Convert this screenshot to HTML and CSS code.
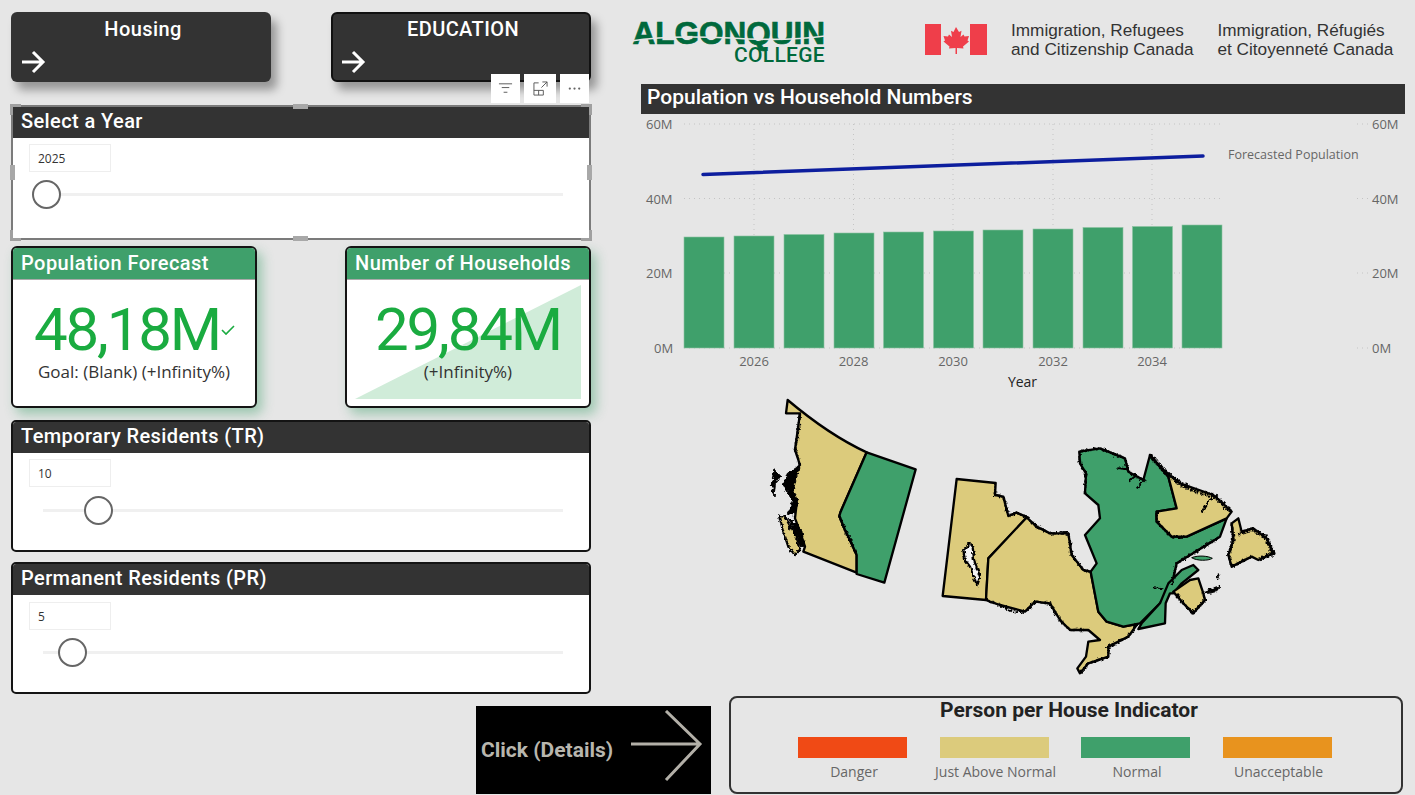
FILE: index.html
```html
<!DOCTYPE html>
<html lang="en">
<head>
<meta charset="utf-8">
<title>Population and Housing Dashboard</title>
<link rel="stylesheet" href="styles.css">
</head>
<body>
<div class="page">
  <div class="main">
    <section class="left">
      <div class="nav">
        <a class="nav-btn">
          <span class="nav-label">Housing</span>
          <svg class="nav-arrow" viewBox="0 0 26 24"><path d="M2 12H23M13 2L23 12L13 22"/></svg>
        </a>
        <a class="nav-btn nav-btn-edged">
          <span class="nav-label">EDUCATION</span>
          <svg class="nav-arrow" viewBox="0 0 26 24"><path d="M2 12H23M13 2L23 12L13 22"/></svg>
        </a>
      </div>

      <div class="panel panel-selected">
        <h2 class="bar-title">Select a Year</h2>
        <div class="slicer">
          <div class="value-box">2025</div>
          <div class="track"><span class="thumb" style="left:0px"></span></div>
        </div>
        <div class="toolbar">
          <span class="tool"><svg viewBox="0 0 16 12"><path d="M1 1H15M4 5H12M6 10H10"/></svg></span>
          <span class="tool tool-wide"><svg viewBox="0 0 16 16"><path d="M6 2H1V15H11V10H1M6 10V15M9 7L15 1M10 1H15V6"/></svg></span>
          <span class="tool"><svg viewBox="0 0 16 4"><circle cx="3" cy="2" r="1.2"/><circle cx="8" cy="2" r="1.2"/><circle cx="13" cy="2" r="1.2"/></svg></span>
        </div>
        <i class="handle h-tl"></i><i class="handle h-tr"></i><i class="handle h-bl"></i><i class="handle h-br"></i>
        <i class="handle h-tc"></i><i class="handle h-bc"></i><i class="handle h-ml"></i><i class="handle h-mr"></i>
      </div>

      <div class="cards">
        <div class="card">
          <h2 class="card-title">Population Forecast</h2>
          <div class="card-body">
            <div class="kpi kpi-goal">48,18M<svg class="check" viewBox="0 0 14 12"><path d="M1 6L5 10L13 2"/></svg></div>
            <div class="kpi-sub">Goal: (Blank) (+Infinity%)</div>
          </div>
        </div>
        <div class="card">
          <h2 class="card-title">Number of Households</h2>
          <div class="card-body">
            <svg class="spark" viewBox="0 0 226 114" preserveAspectRatio="none"><path d="M0 114L226 0V114Z"/></svg>
            <div class="kpi">29,84M</div>
            <div class="kpi-sub">(+Infinity%)</div>
          </div>
        </div>
      </div>

      <div class="panel panel-tr">
        <h2 class="bar-title">Temporary Residents (TR)</h2>
        <div class="slicer">
          <div class="value-box">10</div>
          <div class="track"><span class="thumb" style="left:52px"></span></div>
        </div>
      </div>

      <div class="panel panel-pr">
        <h2 class="bar-title">Permanent Residents (PR)</h2>
        <div class="slicer">
          <div class="value-box">5</div>
          <div class="track"><span class="thumb" style="left:26px"></span></div>
        </div>
      </div>
    </section>

    <section class="right">
      <header class="brand">
        <div class="algonquin">
          <div class="alg-name">ALGONQUIN</div>
          <div class="alg-college">COLLEGE</div>
          <svg class="alg-cut" viewBox="0 0 194 10" preserveAspectRatio="none"><path d="M0 8C30 3 60 3 100 5C130 7 165 7 194 3"/></svg>
        </div>
        <div class="gov">
          <svg class="flag" viewBox="0 0 62 31">
            <rect x="0" y="0" width="16" height="31"/>
            <rect x="45" y="0" width="17" height="31"/>
            <path d="M31 3L34 8L36.500 6.800L35.500 13L38.500 10.500L39.500 12.500L44 12L42.500 16.500L44 17.500L38 22.500L38.500 24.500L32 24L32 30H30.500L30.500 24L24 24.500L24.500 22.500L18.500 17.500L20 16.500L18.500 12L23 12.500L24 10.500L27 13L26 6.800L28.500 8Z"/>
          </svg>
          <div class="gov-text">Immigration, Refugees<br>and Citizenship Canada</div>
          <div class="gov-text">Immigration, Réfugiés<br>et Citoyenneté Canada</div>
        </div>
      </header>

      <h2 class="bar-title chart-title">Population vs Household Numbers</h2>

      <svg class="chart" viewBox="641 114 764 281">
        <g class="grid">
          <path d="M684 124H1222M684 198.500H1222M684 273H1222M684 348H1222"/>
          <path d="M1357 124H1368M1357 198.500H1368M1357 273H1368M1357 348H1368"/>
          <path d="M754 124V348M853.500 124V348M953 124V348M1053 124V348M1152 124V348"/>
        </g>
        <g class="bars">
          <rect x="684" y="237" width="40" height="111"/>
          <rect x="734" y="236" width="40" height="112"/>
          <rect x="784" y="234.500" width="40" height="113.500"/>
          <rect x="834" y="233" width="40" height="115"/>
          <rect x="883.500" y="232" width="40" height="116"/>
          <rect x="933.500" y="231" width="40" height="117"/>
          <rect x="983" y="230" width="40" height="118"/>
          <rect x="1033" y="229" width="40" height="119"/>
          <rect x="1083" y="227.500" width="40" height="120.500"/>
          <rect x="1132.500" y="226.500" width="40" height="121.500"/>
          <rect x="1182" y="225" width="40" height="123"/>
        </g>
        <path class="line" d="M703 174.500L1203 156"/>
        <g class="axis">
          <text x="646" y="129">60M</text>
          <text x="646" y="203.500">40M</text>
          <text x="646" y="278">20M</text>
          <text x="654" y="353">0M</text>
          <text x="1372" y="129">60M</text>
          <text x="1372" y="203.500">40M</text>
          <text x="1372" y="278">20M</text>
          <text x="1372" y="353">0M</text>
          <text class="series-label" x="1228" y="159">Forecasted Population</text>
        </g>
        <g class="axis axis-mid">
          <text x="754" y="366">2026</text>
          <text x="853.500" y="366">2028</text>
          <text x="953" y="366">2030</text>
          <text x="1053" y="366">2032</text>
          <text x="1152" y="366">2034</text>
        </g>
        <text class="axis-title" x="1022.500" y="387">Year</text>
      </svg>

      <svg class="map" viewBox="641 395 764 285">
        <defs>
          <filter id="rough" filterUnits="userSpaceOnUse" x="-300" y="-300" width="2000" height="2000">
            <feTurbulence type="fractalNoise" baseFrequency="0.09" numOctaves="2" seed="4"/>
            <feDisplacementMap in="SourceGraphic" scale="16" xChannelSelector="R" yChannelSelector="G"/>
          </filter>
        </defs>
        <g transform="translate(750 390) scale(.33333)">
          <path class="yellow" d="M113 30C190 95 270 150 350 187L272 365L268 378L285 420L300 450L320 495L320 548L160 485L165 470L150 425L135 385L140 340L125 300L108 280L125 250L150 225L135 180L150 70L108 70Z"/>
          <path class="green" d="M350 187L497 238L403 578L320 552L320 495L300 450L285 420L268 378L272 365Z"/>
          <g filter="url(#rough)">
            <path class="coast" d="M150 225L135 180L145 120L150 70"/>
            <path class="coast" d="M268 378L285 420L300 450L320 495"/>
            <path class="black-fill" d="M72 238L92 258L76 282L72 322L64 285Z"/>
            <path class="black-fill" d="M100 285L112 250L148 228L140 260L130 300L145 340L130 375L112 370L128 335L112 305Z"/>
            <path class="black-fill" d="M115 385L128 392L155 420L165 475L150 465L135 430Z"/>
            <path class="yellow" d="M88 378L105 380L135 435L150 480L135 495L115 470L100 425Z"/>
          </g>
          <path class="yellow" d="M620 267L737 279L735 315L760 320L775 378L800 368L832 382L715 505L708 630L578 618Z"/>
          <g filter="url(#rough)">
            <path class="lake" d="M640 480L660 460L668 470L672 510L690 560L682 585L672 565L660 530L645 510Z"/>
            <path class="coast" d="M737 279L735 315L760 320L775 378L800 368L832 382"/>
          </g>
        </g>
        <g transform="translate(1000 430) scale(.33333)">
          <path class="yellow" d="M-35 385L80 262L110 290L150 310L205 310L215 375L250 420L272 425L295 545L320 575L370 590L412 582L385 620L325 650L325 680L265 700L240 730L232 715L258 680L265 635L300 630L265 600L210 600L180 570L150 520L105 515L75 545L0 525L-30 515L-42 510Z"/>
          <path class="green" d="M238 65L300 55L375 85L385 125L430 150L450 75L505 140L530 235L470 245L470 275L515 320L560 320L680 265L660 320L530 400L515 465L480 520L420 580L370 590L320 575L295 545L272 425L290 400L255 315L300 265L295 225L255 190L258 130L240 100Z"/>
          <path class="yellow" d="M450 75L490 120L540 160L640 195L695 245L680 265L560 320L515 320L470 275L470 245L530 235L505 140Z"/>
          <path class="green" d="M415 597L495 580L497 520L510 490L520 490L545 460L595 420L580 405L545 420L505 460L480 520L425 580Z"/>
          <path class="green green-fine" d="M575 383C595 375 625 378 637 385C625 393 590 393 575 383Z"/>
          <path class="yellow" d="M520 485L570 450L595 445L610 490L615 510L580 550L550 520Z"/>
          <path class="yellow" d="M695 280L715 265L725 305L760 295L800 325L820 370L775 390L755 380L695 410L685 375L700 330Z"/>
          <g filter="url(#rough)">
            <path class="coast" d="M80 262L110 290L150 310L205 310L215 375L250 420L272 425"/>
            <path class="coast" d="M-42 510L0 525L40 545L75 545L105 515L150 520L180 570L210 600L265 600"/>
            <path class="coast" d="M412 582L385 620L325 650L325 680L265 700L240 730"/>
            <path class="coast" d="M238 65L300 55L375 85L385 125L430 150"/>
            <path class="coast" d="M255 190L258 130L240 100L238 65"/>
            <path class="coast coast-heavy" d="M450 75L490 120L540 160L600 190L640 195L695 245"/>
            <path class="coast" d="M470 245L470 275L515 320L560 320"/>
            <path class="coast" d="M660 320L530 400L515 465"/>
            <path class="thin" d="M640 195L605 245M385 155L410 135M410 175L435 150M355 115L385 118"/>
            <path class="thin" d="M462 472L490 475"/>
            <path class="black-fill" d="M612 484L635 474L656 468L652 484L625 490Z"/>
            <path class="black-fill" d="M650 440L657 427L659 430L654 445Z"/>
            <path class="coast coast-heavy" d="M715 310L760 298L800 325L820 370L775 390"/>
            <path class="coast" d="M695 280L700 330L685 375L695 410L755 380"/>
            <path class="coast" d="M520 485L550 520L580 550L615 510L610 490"/>
          </g>
        </g>
      </svg>
    </section>
  </div>

  <div class="bottom">
    <a class="details">
      <span class="details-label">Click (Details)</span>
      <svg class="details-arrow" viewBox="0 0 74 72"><path d="M1 34H70M36 1L70 34L36 70"/></svg>
    </a>
    <div class="legend">
      <h3 class="legend-title">Person per House Indicator</h3>
      <div class="legend-row">
        <div class="legend-item"><span class="swatch sw-danger"></span><span class="legend-label">Danger</span></div>
        <div class="legend-item"><span class="swatch sw-above"></span><span class="legend-label">Just Above Normal</span></div>
        <div class="legend-item"><span class="swatch sw-normal"></span><span class="legend-label">Normal</span></div>
        <div class="legend-item"><span class="swatch sw-unacc"></span><span class="legend-label">Unacceptable</span></div>
      </div>
    </div>
  </div>
</div>
</body>
</html>
```
FILE: styles.css
```css
* { box-sizing: border-box; }
html, body { margin: 0; height: 795px; overflow: hidden; }
body { background: #e6e6e6; font-family: "Open Sans", "Liberation Sans", sans-serif; color: #333; }
h2, h3 { margin: 0; font-family: Roboto, "Liberation Sans", sans-serif; }

.page { width: 1415px; height: 795px; padding: 12px 10px 0 11px; display: flex; flex-direction: column; }
.main { display: flex; gap: 50px; height: 682px; }
.left { width: 580px; flex: none; display: flex; flex-direction: column; }
.right { flex: 1; display: flex; flex-direction: column; }

.nav { display: flex; justify-content: space-between; margin-bottom: 23px; height: 70px; }
.nav-btn { width: 260px; height: 70px; background: #333; border-radius: 6px; box-shadow: 6px 8px 10px rgba(0,0,0,.35); position: relative; display: block; color: #fff; text-align: center; padding: 4px 0 0 4px; }
.nav-btn-edged { border: 2px solid #111; padding: 2px 0 0 4px; }
.nav-label { font: 500 20px/26px Roboto, sans-serif; letter-spacing: .4px; }
.nav-arrow { position: absolute; left: 9px; top: 38px; width: 26px; height: 24px; fill: none; stroke: #fff; stroke-width: 3; }
.nav-btn-edged .nav-arrow { left: 7px; top: 36px; }

.panel { background: #fff; border: 2px solid #141414; border-radius: 5px; height: 132px; position: relative; }
.panel-tr { margin-top: 12px; }
.panel-pr { margin-top: 10px; }
.panel-selected { border: 2px solid #7b7b7b; border-radius: 0; height: 135px; }
.bar-title { background: #333; color: #fff; font-weight: 500; font-size: 20px; line-height: 29px; height: 31px; padding-left: 8px; letter-spacing: .4px; }
.panel-tr .bar-title, .panel-pr .bar-title { border-radius: 3px 3px 0 0; }
.slicer { padding: 6px 26px 0 16px; }
.panel-pr .slicer { padding-top: 7px; }
.value-box { width: 82px; height: 28px; border: 1px solid #eee; background: #fff; font-size: 12px; line-height: 28px; padding-left: 8px; color: #333; }
.track { position: relative; height: 3px; background: #f0f0f0; margin: 21px 0 0 14px; }
.panel-tr .track { margin-top: 22px; }
.thumb { position: absolute; top: -13px; width: 29px; height: 29px; margin-left: -11px; border: 2px solid #666; border-radius: 50%; background: #fff; }

.handle { position: absolute; background: #a8a8a8; }
.h-tl, .h-tr, .h-bl, .h-br { width: 11px; height: 11px; background: none; border: 0 solid #a0a0a0; }
.h-tl { left: -3px; top: -3px; border-width: 3px 0 0 3px; }
.h-tr { right: -3px; top: -3px; border-width: 3px 3px 0 0; }
.h-bl { left: -3px; bottom: -3px; border-width: 0 0 3px 3px; }
.h-br { right: -3px; bottom: -3px; border-width: 0 3px 3px 0; }
.h-tc, .h-bc { width: 15px; height: 5px; left: 280px; }
.h-tc { top: -3px; }
.h-bc { bottom: -3px; }
.h-ml, .h-mr { width: 5px; height: 15px; top: 58px; }
.h-ml { left: -3px; }
.h-mr { right: -3px; }

.toolbar { position: absolute; right: 0; top: -33px; display: flex; gap: 4px; }
.tool { width: 29px; height: 29px; background: #fff; display: flex; align-items: center; justify-content: center; }
.tool-wide { width: 32px; }
.tool svg { width: 15px; height: 15px; fill: none; stroke: #555; stroke-width: 1; }
.tool:last-child svg { fill: #666; stroke: none; }

.cards { display: flex; justify-content: space-between; margin-top: 6px; }
.card { width: 246px; height: 162px; background: #fff; border: 2px solid #141414; border-radius: 6px; box-shadow: 5px 6px 12px rgba(62,160,106,.45); overflow: hidden; }
.card-title { background: #3fa06b; color: #fff; font-weight: 500; font-size: 20px; line-height: 30px; height: 32px; padding-left: 8px; border-bottom: 1px solid #aaa; letter-spacing: .45px; }
.card-body { position: relative; height: 128px; text-align: center; }
.kpi { position: relative; font: 400 60px/60px Roboto, sans-serif; color: #1aab40; letter-spacing: -2.2px; padding-top: 20px; height: 81px; }
.kpi-goal { padding-right: 14px; }
.kpi-sub { position: relative; font-size: 17px; line-height: 22px; color: #333; }
.check { position: absolute; left: 208px; top: 44px; width: 14px; height: 12px; fill: none; stroke: #1aab40; stroke-width: 1.6; }
.spark { position: absolute; left: 8px; top: 5px; width: 226px; height: 114px; fill: #d0ecd9; }

.brand { height: 72px; display: flex; }
.algonquin { width: 194px; margin: 9px 0 0 -10px; color: #00693c; font-family: "Liberation Sans", sans-serif; font-weight: 700; text-align: right; position: relative; }
.alg-name { font-size: 31.500px; line-height: 25px; -webkit-text-stroke: .7px #00693c; }
.alg-college { font: 500 21px/16px Roboto, sans-serif; margin-top: 1px; letter-spacing: .3px; }
.alg-cut { position: absolute; left: 0; top: 12px; width: 194px; height: 10px; fill: none; stroke: #e6e6e6; stroke-width: 1.600; }
.gov { display: flex; margin: 11px 0 0 100px; }
.flag { width: 62px; height: 31px; fill: #ef3e4a; margin-top: 1px; }
.gov-text { font: 400 17.200px/18.500px "Liberation Sans", sans-serif; color: #333; margin-left: 24px; margin-top: -2px; white-space: nowrap; }

.chart-title { font-size: 21px; padding-left: 6px; height: 30px; line-height: 27px; flex: none; letter-spacing: 0; }
.chart { display: block; width: 764px; height: 281px; flex: none; }
.grid path { fill: none; stroke: #c4c4c4; stroke-width: 1; stroke-dasharray: 1 4; }
.bars rect { fill: #3fa06b; stroke: #8cc3a2; stroke-width: .6; }
.line { fill: none; stroke: #0d1e9e; stroke-width: 3.500; stroke-linecap: round; }
.axis text { font: 400 13px "Open Sans", sans-serif; fill: #666; }
.axis .series-label { font-size: 12.500px; }
.axis-mid text { text-anchor: middle; }
.axis-title { font: 400 14px "Open Sans", sans-serif; fill: #222; text-anchor: middle; }

.map { display: block; width: 764px; height: 285px; flex: none; }
.map path { stroke-linejoin: round; }
.yellow { fill: #dccb7c; stroke: #000; stroke-width: 7; }
.green { fill: #3fa06b; stroke: #000; stroke-width: 7; }
.green-fine { stroke-width: 3; }
.lake { fill: #f4f4f4; stroke: #000; stroke-width: 7; }
.black-fill { fill: #000; stroke: #000; stroke-width: 3; }
.thin { fill: none; stroke: #000; stroke-width: 6; }
.coast { fill: none; stroke: #000; stroke-width: 8; stroke-dasharray: 7 3 11 2 5 4; }
.coast-heavy { stroke-width: 13; }

.bottom { display: flex; align-items: flex-end; gap: 18px; margin-top: 2px; padding-left: 465px; }
.details { width: 235px; height: 88px; background: #000; display: flex; align-items: center; justify-content: space-between; padding: 0 7px 0 5px; }
.details-label { font: 700 21px Roboto, sans-serif; color: #b8b6ae; white-space: nowrap; }
.details-arrow { width: 74px; height: 72px; fill: none; stroke: #b3b0a8; stroke-width: 3; margin-top: -8px; flex: none; }
.legend { width: 674px; height: 98px; border: 2px solid #333; border-radius: 8px; position: relative; padding-top: 0; }
.legend-title { font: 700 21px/24px Roboto, sans-serif; color: #222; text-align: center; padding-left: 6px; }
.legend-row { display: flex; gap: 32.500px; margin: 15px 0 0 67px; }
.legend-item { width: 109px; display: flex; flex-direction: column; align-items: center; }
.swatch { width: 109px; height: 21px; display: block; }
.sw-danger { background: #f04a15; }
.sw-above { background: #dccb7c; }
.sw-normal { background: #3fa06b; }
.sw-unacc { background: #e8931e; }
.legend-label { font-size: 14px; line-height: 20px; margin-top: 4px; color: #666; white-space: nowrap; padding-left: 3px; }
```
